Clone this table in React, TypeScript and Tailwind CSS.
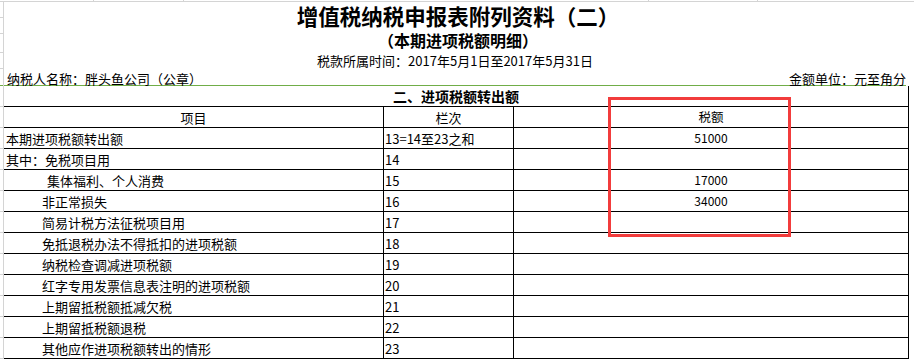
const FONT = { fontFamily: '"Noto Sans CJK SC", "Noto Sans", sans-serif' };

type Row = { item: string; indent?: number; line: string; amount?: string };

const rows: Row[] = [
  { item: "本期进项税额转出额", line: "13=14至23之和", amount: "51000" },
  { item: "其中：免税项目用", line: "14" },
  { item: "集体福利、个人消费", indent: 43, line: "15", amount: "17000" },
  { item: "非正常损失", indent: 38, line: "16", amount: "34000" },
  { item: "简易计税方法征税项目用", indent: 38, line: "17" },
  { item: "免抵退税办法不得抵扣的进项税额", indent: 38, line: "18" },
  { item: "纳税检查调减进项税额", indent: 38, line: "19" },
  { item: "红字专用发票信息表注明的进项税额", indent: 38, line: "20" },
  { item: "上期留抵税额抵减欠税", indent: 38, line: "21" },
  { item: "上期留抵税额退税", indent: 38, line: "22" },
  { item: "其他应作进项税额转出的情形", indent: 38, line: "23" },
];

function TopStrip() {
  return (
    <div className="flex h-[2px] border-b border-[#d4d4d4]">
      <div className="w-[94px] border-r border-[#d4d4d4]" />
      <div className="w-[90px] border-r border-[#d4d4d4]" />
      <div className="w-[465px] border-r border-[#d4d4d4]" />
      <div className="w-[109px] border-r border-[#d4d4d4]" />
      <div className="flex-1" />
    </div>
  );
}

function Header() {
  return (
    <div className="flex">
      <div className="flex w-[4px] flex-col border-r border-[#d4d4d4]">
        <div className="h-[16px] border-b border-[#d4d4d4]" />
        <div className="h-[16px] border-b border-[#d4d4d4]" />
        <div className="h-[19px] border-b border-[#d4d4d4]" />
        <div className="h-[16px] border-b border-[#d4d4d4]" />
        <div className="h-[17px] border-b border-[#70ad47]" />
      </div>
      <div className="flex w-[902px] flex-col">
        <div className="flex h-[28px] items-center justify-center pl-[6px] text-[21.5px] font-bold leading-none text-black">
          增值税纳税申报表附列资料（二）
        </div>
        <div className="flex h-[20px] items-center justify-center pl-[6px] text-[16px] font-bold leading-none text-black">
          （本期进项税额明细）
        </div>
        <div className="flex h-[21px] items-center justify-center text-[13px] leading-none text-black">
          税款所属时间：2017年5月1日至2017年5月31日
        </div>
        <div className="flex h-[15px] items-center justify-between border-b border-[#70ad47] pl-[3px] text-[13px] leading-none text-black">
          <span>纳税人名称：胖头鱼公司（公章）</span>
          <span>金额单位：元至角分</span>
        </div>
      </div>
    </div>
  );
}

function Table() {
  return (
    <div className="flex">
      <div className="flex w-[4px] flex-col border-r border-[#d4d4d4]">
        {Array.from({ length: 13 }).map((_, i) => (
          <div key={i} className="h-[21px] border-b border-[#d4d4d4]" />
        ))}
      </div>
      <div className="w-[905px] border-r border-black text-black">
        <div className="flex h-[21px] items-center justify-center border-b border-black text-[14px] font-bold leading-none">
          二、进项税额转出额
        </div>
        <div className="flex h-[21px] border-b border-black text-[13px] leading-none">
          <div className="flex w-[380px] items-center justify-center border-r border-black">项目</div>
          <div className="flex w-[130px] items-center justify-center border-r border-black">栏次</div>
          <div className="flex flex-1 items-center justify-center text-[12.5px]">税额</div>
        </div>
        {rows.map((r) => (
          <div key={r.line} className="flex h-[21px] border-b border-black text-[13px] leading-none">
            <div
              className="flex w-[380px] items-center border-r border-black"
              style={{ paddingLeft: r.indent ?? 2 }}
            >
              {r.item}
            </div>
            <div className="flex w-[130px] items-center border-r border-black pl-[1px]">{r.line}</div>
            <div className="flex flex-1 items-center justify-center text-[12px]">{r.amount}</div>
          </div>
        ))}
      </div>
    </div>
  );
}

export default function App() {
  return (
    <div className="relative h-[360px] w-[914px] overflow-hidden bg-white" style={FONT}>
      <TopStrip />
      <Header />
      <Table />
      <div className="pointer-events-none absolute left-[608px] top-[97px] h-[140px] w-[183px] border-[3px] border-[#f23c3c]" />
    </div>
  );
}
